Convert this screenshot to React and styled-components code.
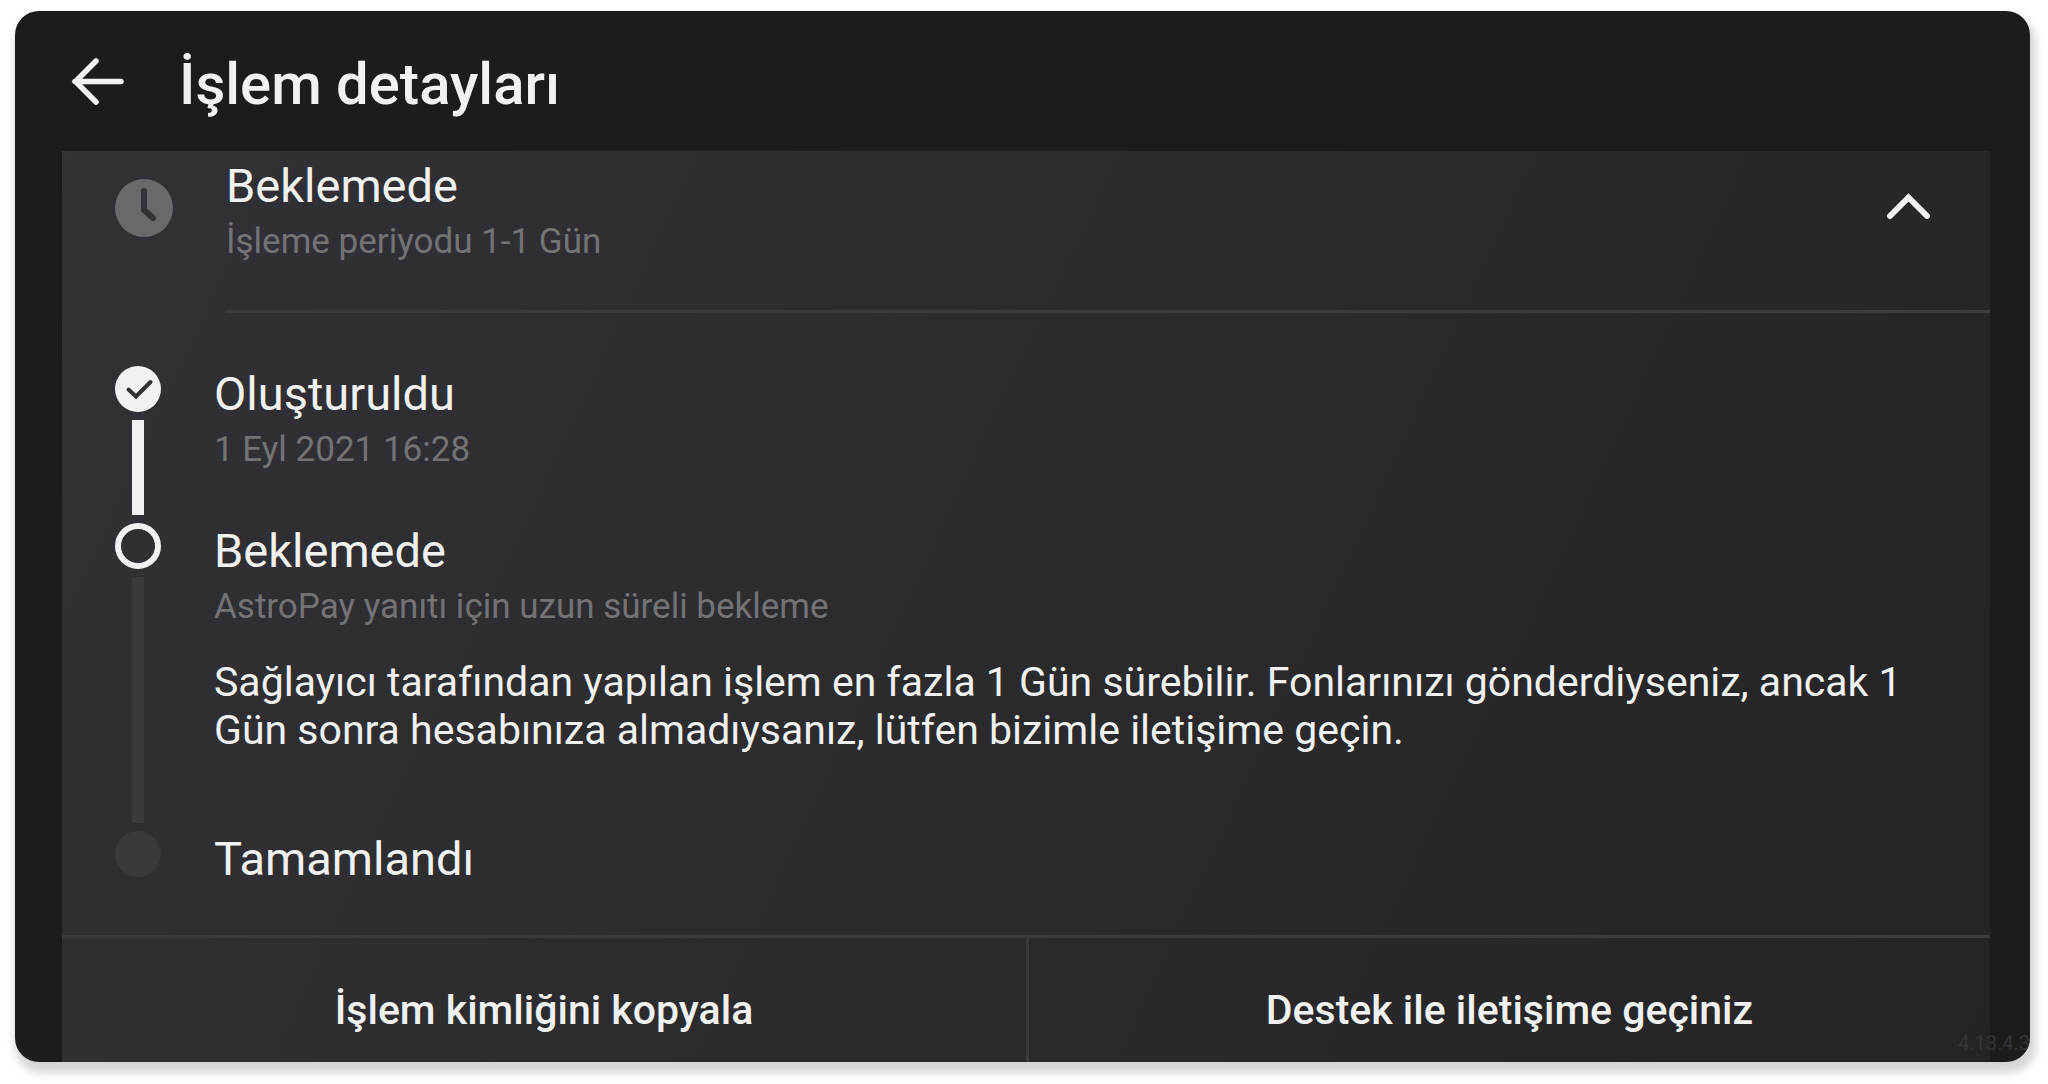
import styled, { createGlobalStyle } from "styled-components";

const steps = [
  {
    id: "created",
    state: "done",
    title: "Oluşturuldu",
    note: "1 Eyl 2021 16:28",
  },
  {
    id: "pending",
    state: "current",
    title: "Beklemede",
    note: "AstroPay yanıtı için uzun süreli bekleme",
    text: "Sağlayıcı tarafından yapılan işlem en fazla 1 Gün sürebilir. Fonlarınızı gönderdiyseniz, ancak 1 Gün sonra hesabınıza almadıysanız, lütfen bizimle iletişime geçin.",
  },
  {
    id: "completed",
    state: "next",
    title: "Tamamlandı",
  },
];

function Step({ state, title, note, text, isLast }) {
  return (
    <StyledStep>
      <StyledRail>
        <StyledMarker $state={state}>
          {state === "done" && (
            <svg width="46" height="46" viewBox="0 0 46 46" fill="none">
              <path
                d="M13.500 23.500L21 30.500L35.500 16"
                stroke="#313035"
                strokeWidth="4"
                strokeLinecap="round"
              />
            </svg>
          )}
        </StyledMarker>
        {!isLast && <StyledLine $state={state} />}
      </StyledRail>
      <StyledStepBody $isLast={isLast}>
        <StyledTitle>{title}</StyledTitle>
        {note && <StyledNote>{note}</StyledNote>}
        {text && <StyledText>{text}</StyledText>}
      </StyledStepBody>
    </StyledStep>
  );
}

export default function App() {
  return (
    <>
      <GlobalStyle />
      <StyledPage>
        <StyledFrame>
          <StyledHeader>
            <StyledIconButton type="button" aria-label="Geri">
              <svg width="56" height="56" viewBox="0 0 56 56" fill="none">
                <path
                  d="M51 28.500H5M26 8L5.500 28.500L26 49"
                  stroke="#f1f1f2"
                  strokeWidth="5.500"
                  strokeLinecap="round"
                />
              </svg>
            </StyledIconButton>
            <StyledHeadline>İşlem detayları</StyledHeadline>
          </StyledHeader>

          <StyledCard>
            <StyledSummary>
              <StyledClock width="58" height="58" viewBox="0 0 58 58" fill="none">
                <circle cx="29" cy="29" r="29" fill="#69696a" />
                <path
                  d="M29 12V31L38 39"
                  stroke="#323136"
                  strokeWidth="6"
                  strokeLinecap="round"
                  strokeLinejoin="round"
                />
              </StyledClock>
              <StyledSummaryBody>
                <div>
                  <StyledTitle>Beklemede</StyledTitle>
                  <StyledNote>İşleme periyodu 1-1 Gün</StyledNote>
                </div>
                <StyledIconButton type="button" aria-label="Kapat">
                  <svg width="56" height="56" viewBox="0 0 56 56" fill="none">
                    <path
                      d="M10 38L28.500 19.500L47 38"
                      stroke="#f1f1f2"
                      strokeWidth="6"
                      strokeLinecap="round"
                    />
                  </svg>
                </StyledIconButton>
              </StyledSummaryBody>
            </StyledSummary>

            <StyledSteps>
              {steps.map((step, index) => (
                <Step
                  key={step.id}
                  {...step}
                  isLast={index === steps.length - 1}
                />
              ))}
            </StyledSteps>

            <StyledActions>
              <StyledAction type="button">İşlem kimliğini kopyala</StyledAction>
              <StyledAction type="button">
                Destek ile iletişime geçiniz
              </StyledAction>
            </StyledActions>
          </StyledCard>
          <StyledVersion>4.13.4.3</StyledVersion>
        </StyledFrame>
      </StyledPage>
    </>
  );
}

const GlobalStyle = createGlobalStyle`
  * {
    box-sizing: border-box;
  }

  body {
    margin: 0;
    background-color: #ffffff;
    color: #f1f1f2;
    font-family: Roboto, sans-serif;
  }

  h1, h2, p, ul {
    margin: 0;
    padding: 0;
  }

  button {
    border: 0;
    padding: 0;
    background: none;
    color: inherit;
    font: inherit;
    cursor: pointer;
  }

  svg {
    display: block;
  }
`;

const StyledPage = styled.div`
  display: flex;
  min-height: 100vh;
  padding: 11px 18px 22px 15px;
`;

const StyledFrame = styled.main`
  position: relative;
  flex: 1;
  display: flex;
  flex-direction: column;
  padding: 0 40px 0 47px;
  border-radius: 24px;
  overflow: hidden;
  background-color: #1c1c1d;
  box-shadow: 3px 8px 10px 3px rgba(0, 0, 0, 0.17);
`;

const StyledHeader = styled.header`
  display: flex;
  align-items: center;
  gap: 53px;
  height: 140px;
  padding-left: 8px;
`;

const StyledIconButton = styled.button`
  flex: none;
`;

const StyledHeadline = styled.h1`
  padding-top: 6px;
  font-size: 58px;
  font-weight: 500;
  line-height: 68px;
`;

const StyledCard = styled.section`
  flex: 1;
  display: flex;
  flex-direction: column;
  background: linear-gradient(115deg, #323136 0%, #2b2b2d 50%, #242426 100%);
`;

const StyledSummary = styled.div`
  display: flex;
  gap: 53px;
  padding: 7px 0 0 53px;
`;

const StyledClock = styled.svg`
  flex: none;
  margin-top: 21px;
`;

const StyledSummaryBody = styled.div`
  flex: 1;
  display: flex;
  justify-content: space-between;
  align-items: flex-start;
  padding: 0 54px 48px 0;
  border-bottom: 3px solid #3b3b3e;

  ${StyledIconButton} {
    margin-top: 20px;
  }
`;

const StyledTitle = styled.h2`
  font-size: 47px;
  font-weight: 400;
  line-height: 56px;
`;

const StyledNote = styled.p`
  margin-top: 8px;
  color: #737374;
  font-size: 35px;
  line-height: 40px;
`;

const StyledText = styled.p`
  margin-top: 31px;
  font-size: 41px;
  line-height: 48px;
`;

const StyledSteps = styled.ul`
  flex: 1;
  padding: 53px 53px 48px 53px;
  list-style: none;
`;

const StyledStep = styled.li`
  display: flex;
  gap: 53px;
`;

const StyledRail = styled.div`
  flex: none;
  display: flex;
  flex-direction: column;
  align-items: center;
  width: 46px;
`;

const StyledMarker = styled.span`
  width: 46px;
  height: 46px;
  border-radius: 50%;
  border: ${({ $state }) => ($state === "current" ? "6px solid #f1f1f2" : "0")};
  background-color: ${({ $state }) =>
    ({ done: "#f1f1f2", current: "transparent", next: "#3a393e" })[$state]};
`;

const StyledLine = styled.span`
  flex: 1;
  width: 12px;
  margin: 8px 0;
  background-color: ${({ $state }) =>
    $state === "done" ? "#f1f1f2" : "#3a393e"};
`;

const StyledStepBody = styled.div`
  flex: 1;
  padding-bottom: ${({ $isLast }) => ($isLast ? "0" : "53px")};

  &:has(${StyledText}) {
    padding-bottom: 77px;
  }
`;

const StyledActions = styled.div`
  display: grid;
  grid-template-columns: 1fr 1fr;
  border-top: 3px solid #3b3b3e;
`;

const StyledAction = styled.button`
  padding: 48px 16px 28px;
  font-size: 41px;
  font-weight: 500;
  line-height: 48px;

  & + & {
    border-left: 3px solid #3b3b3e;
  }
`;

const StyledVersion = styled.small`
  position: absolute;
  right: 0;
  bottom: 7px;
  color: #343436;
  font-size: 20px;
  line-height: 24px;
`;
